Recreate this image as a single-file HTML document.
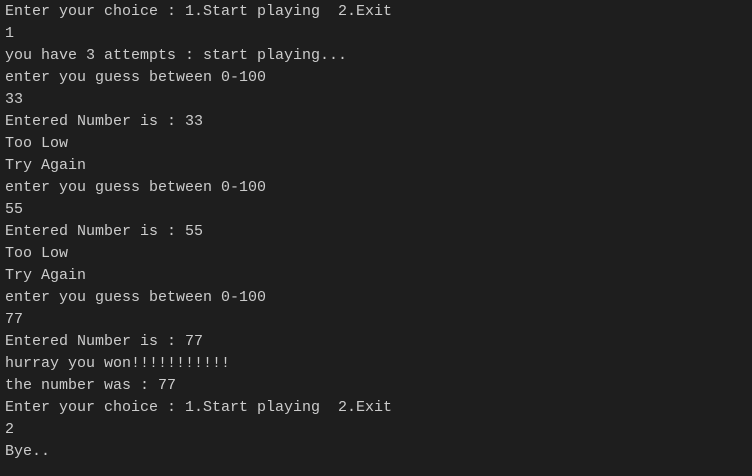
<!DOCTYPE html>
<html><head><style>
html,body{margin:0;padding:0;background:#1e1e1e;width:752px;height:476px;overflow:hidden}
pre{margin:0;padding:0 0 0 5px;color:#cccccc;font-family:"Liberation Mono",monospace;font-size:15px;line-height:22px;white-space:pre;position:relative;top:1px}
</style></head><body><pre>Enter your choice : 1.Start playing  2.Exit
1
you have 3 attempts : start playing...
enter you guess between 0-100
33
Entered Number is : 33
Too Low
Try Again
enter you guess between 0-100
55
Entered Number is : 55
Too Low
Try Again
enter you guess between 0-100
77
Entered Number is : 77
hurray you won!!!!!!!!!!!
the number was : 77
Enter your choice : 1.Start playing  2.Exit
2
Bye..</pre></body></html>
